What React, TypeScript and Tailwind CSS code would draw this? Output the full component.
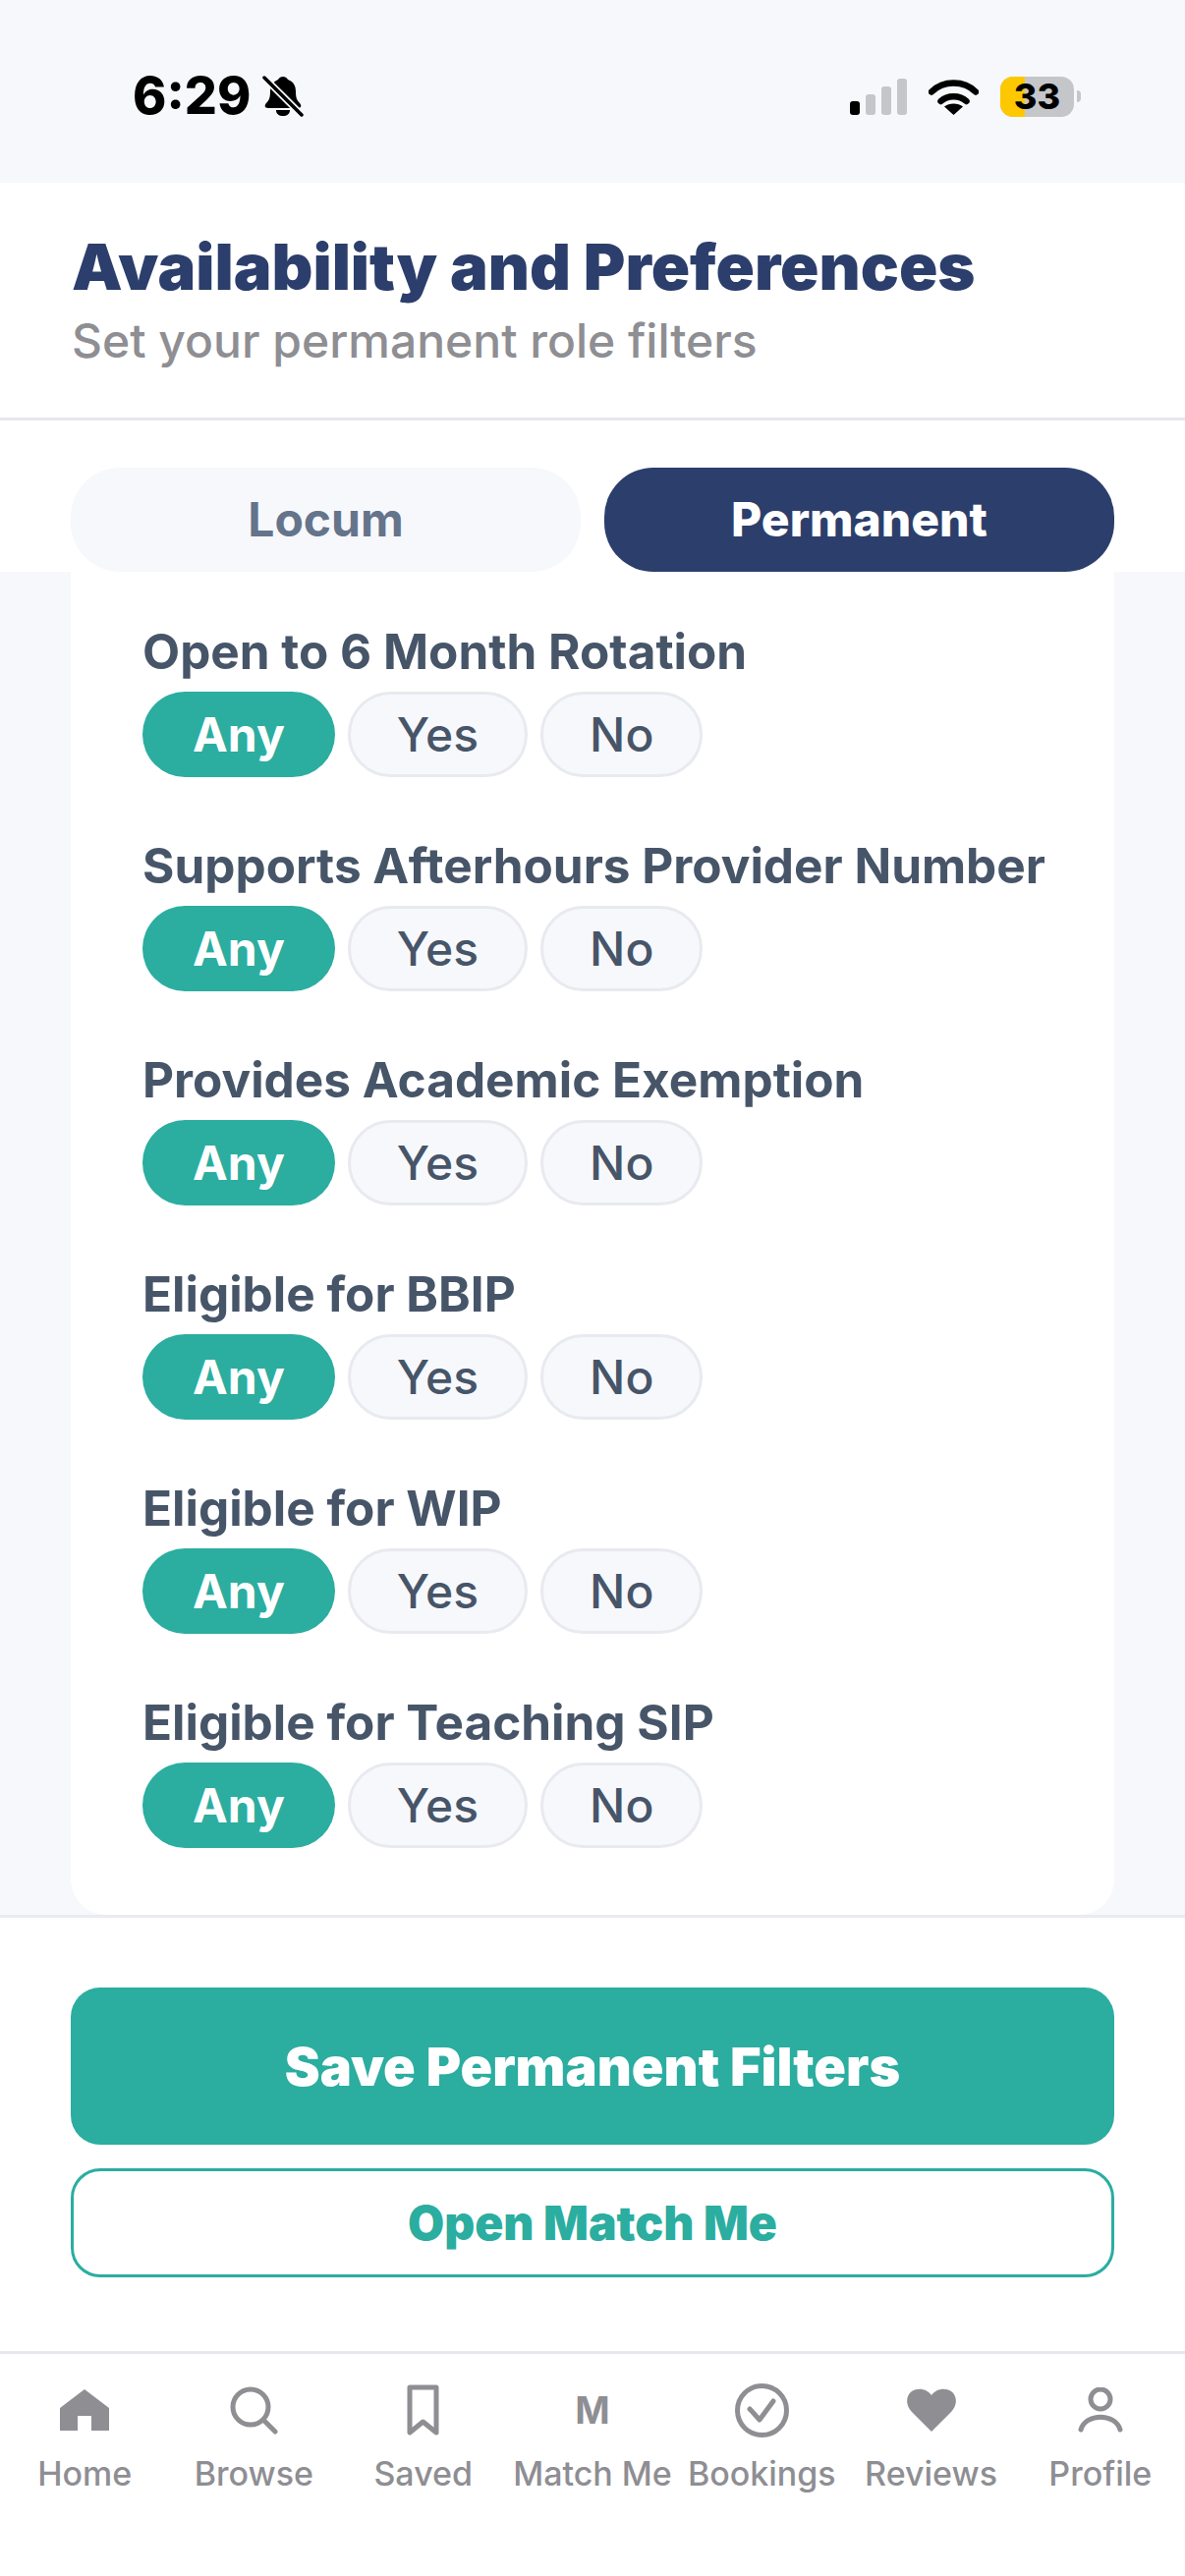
// App.tsx
const filters = [
  "Open to 6 Month Rotation",
  "Supports Afterhours Provider Number",
  "Provides Academic Exemption",
  "Eligible for BBIP",
  "Eligible for WIP",
  "Eligible for Teaching SIP",
];

function StatusBar() {
  return (
    <div className="flex h-[186px] shrink-0 items-start justify-between bg-[#f7f8fc] pl-[135px] pr-[106px] pt-[68px]">
      <div className="flex h-[60px] items-center gap-[12px]">
        <span className="text-[52px] leading-[60px] font-extrabold text-black">6:29</span>
        <svg width="42" height="42" viewBox="0 0 42 42" className="text-black">
          <path d="M21 1c2 0 4 1 5 3 6 2 8 7 8 12 0 6 1 9 4 12 2 2 2 5-2 5H6c-4 0-4-3-2-5 3-3 4-6 4-12 0-5 3-10 8-12 1-2 3-3 5-3z" fill="currentColor" />
          <path d="M14 35h14c0 4-3 6-7 6s-7-2-7-6z" fill="currentColor" />
          <path d="M1 1l40 40" stroke="#f7f8fc" strokeWidth="7" />
          <path d="M2 2l38 38" stroke="currentColor" strokeWidth="3.5" strokeLinecap="round" />
        </svg>
      </div>
      <div className="flex h-[60px] items-center gap-[22px]">
        <div className="flex h-[37px] items-end gap-[6px]">
          <div className="h-[14px] w-[10px] rounded-[3px] bg-black" />
          <div className="h-[21px] w-[10px] rounded-[3px] bg-[#c5c6ca]" />
          <div className="h-[29px] w-[10px] rounded-[3px] bg-[#c5c6ca]" />
          <div className="h-[37px] w-[10px] rounded-[3px] bg-[#c5c6ca]" />
        </div>
        <svg width="51" height="37" viewBox="0 0 51 37" fill="none">
          <path d="M3 13.5C15 1.5 36 1.5 48 13.5" stroke="black" strokeWidth="6.5" strokeLinecap="round" />
          <path d="M12.5 23C19 16.5 32 16.5 38.5 23" stroke="black" strokeWidth="6.5" strokeLinecap="round" />
          <path d="M25.5 37L16 28.5C21 24.5 30 24.5 35 28.5Z" fill="black" />
        </svg>
        <div className="flex items-center gap-[3px]">
          <div className="relative flex h-[41px] w-[75px] items-center justify-center overflow-hidden rounded-[13px] bg-[#c5c6ca]">
            <div className="absolute inset-y-0 left-0 w-[25px] bg-[#fdc800]" />
            <span className="relative text-[36px] leading-[41px] font-extrabold text-black">33</span>
          </div>
          <div className="h-[12px] w-[4px] rounded-r-full bg-[#c5c6ca]" />
        </div>
      </div>
    </div>
  );
}

function Pill({ label, active }: { label: string; active?: boolean }) {
  return (
    <div
      className={
        active
          ? "flex h-[87px] items-center justify-center rounded-[44px] bg-[#2bada0] px-[51px] text-[48px] font-bold text-white"
          : "flex h-[87px] items-center justify-center rounded-[44px] border-[3px] border-[#e8eaf0] bg-[#f7f8fc] px-[47px] text-[48px] font-medium text-[#475569]"
      }
    >
      {label}
    </div>
  );
}

function FilterRow({ label }: { label: string }) {
  return (
    <div className="flex flex-col gap-[14px]">
      <div className="text-[49.5px] leading-[54px] font-bold text-[#475569]">{label}</div>
      <div className="flex gap-[13px]">
        <Pill label="Any" active />
        <Pill label="Yes" />
        <Pill label="No" />
      </div>
    </div>
  );
}

function HomeIcon() {
  return (
    <svg width="50" height="42" viewBox="0 0 50 42" fill="#8e8e93">
      <path d="M25 0L50 19V42H32V27H18V42H0V19Z" />
    </svg>
  );
}

function SearchIcon() {
  return (
    <svg width="50" height="50" viewBox="0 0 50 50" fill="none" stroke="#8e8e93" strokeWidth="5" strokeLinecap="round">
      <circle cx="22" cy="22" r="18" />
      <path d="M35 35L47 47" />
    </svg>
  );
}

function SavedIcon() {
  return (
    <svg width="33" height="52" viewBox="0 0 33 52" fill="none" stroke="#8e8e93" strokeWidth="5" strokeLinejoin="round">
      <path d="M3 3H30V49L16.5 38L3 49Z" />
    </svg>
  );
}

function BookingsIcon() {
  return (
    <svg width="55" height="55" viewBox="0 0 55 55" fill="none" stroke="#8e8e93" strokeWidth="5" strokeLinecap="round" strokeLinejoin="round">
      <circle cx="27.5" cy="27.5" r="25" />
      <path d="M15 26L25 37L39 18" />
    </svg>
  );
}

function HeartIcon() {
  return (
    <svg width="50" height="44" viewBox="0 0 50 44" fill="#8e8e93">
      <path d="M25 44L5 24C-2 17-1 7 5 3c6-4 15-3 20 4C30 0 39-1 45 3c6 4 7 14 0 21Z" />
    </svg>
  );
}

function ProfileIcon() {
  return (
    <svg width="46" height="46" viewBox="0 0 46 46" fill="none" stroke="#8e8e93" strokeWidth="5" strokeLinecap="round">
      <circle cx="23" cy="12" r="10" />
      <path d="M3 43C8 26 38 26 43 43" />
    </svg>
  );
}

const tabs = [
  { label: "Home", icon: <HomeIcon /> },
  { label: "Browse", icon: <SearchIcon /> },
  { label: "Saved", icon: <SavedIcon /> },
  { label: "Match Me", icon: <span className="text-[38px] leading-[56px] font-bold text-[#8e8e93]">M</span> },
  { label: "Bookings", icon: <BookingsIcon /> },
  { label: "Reviews", icon: <HeartIcon /> },
  { label: "Profile", icon: <ProfileIcon /> },
];

export default function App() {
  return (
    <div className="flex h-[2622px] w-[1206px] flex-col bg-white font-['Inter',sans-serif]">
      <StatusBar />

      {/* Header */}
      <div className="flex h-[242px] shrink-0 flex-col border-b-[3px] border-[#e6e8ed] pl-[73px] pt-[50px]">
        <h1 className="text-[65px] leading-[72px] font-black text-[#2c3e6b]">Availability and Preferences</h1>
        <p className="mt-[12px] text-[48px] leading-[54px] font-medium text-[#8e8e93]">Set your permanent role filters</p>
      </div>

      {/* Locum / Permanent */}
      <div className="flex shrink-0 gap-[24px] px-[72px] pt-[48px]">
        <div className="flex h-[106px] flex-1 items-center justify-center rounded-[50px] bg-[#f7f8fc] text-[48px] font-bold text-[#64748b]">
          Locum
        </div>
        <div className="flex h-[106px] flex-1 items-center justify-center rounded-[50px] bg-[#2c3e6b] text-[48px] font-extrabold text-white">
          Permanent
        </div>
      </div>

      {/* Filter card */}
      <div className="flex-1 bg-[#f7f8fc] px-[72px]">
        <div className="flex h-full flex-col gap-[63px] rounded-b-[36px] bg-white pl-[73px] pt-[54px]">
          {filters.map((label) => (
            <FilterRow key={label} label={label} />
          ))}
        </div>
      </div>

      {/* Actions */}
      <div className="flex h-[447px] shrink-0 flex-col gap-[24px] border-y-[3px] border-t-[#e9eaf3] border-b-[#e6e8ed] px-[72px] pt-[71px]">
        <button className="flex h-[160px] items-center justify-center rounded-[30px] bg-[#2bada0] text-[54px] font-black text-white">
          Save Permanent Filters
        </button>
        <button className="flex h-[111px] items-center justify-center rounded-[30px] border-[3px] border-[#2bada0] text-[48px] font-black text-[#2bada0]">
          Open Match Me
        </button>
      </div>

      {/* Tab bar */}
      <div className="grid h-[226px] shrink-0 grid-cols-7 pt-[29px]">
        {tabs.map((tab) => (
          <div key={tab.label} className="flex flex-col items-center">
            <div className="flex h-[56px] items-center justify-center">{tab.icon}</div>
            <span className="mt-[17px] text-[34px] leading-[40px] font-medium whitespace-nowrap text-[#8e8e93]">{tab.label}</span>
          </div>
        ))}
      </div>
    </div>
  );
}
